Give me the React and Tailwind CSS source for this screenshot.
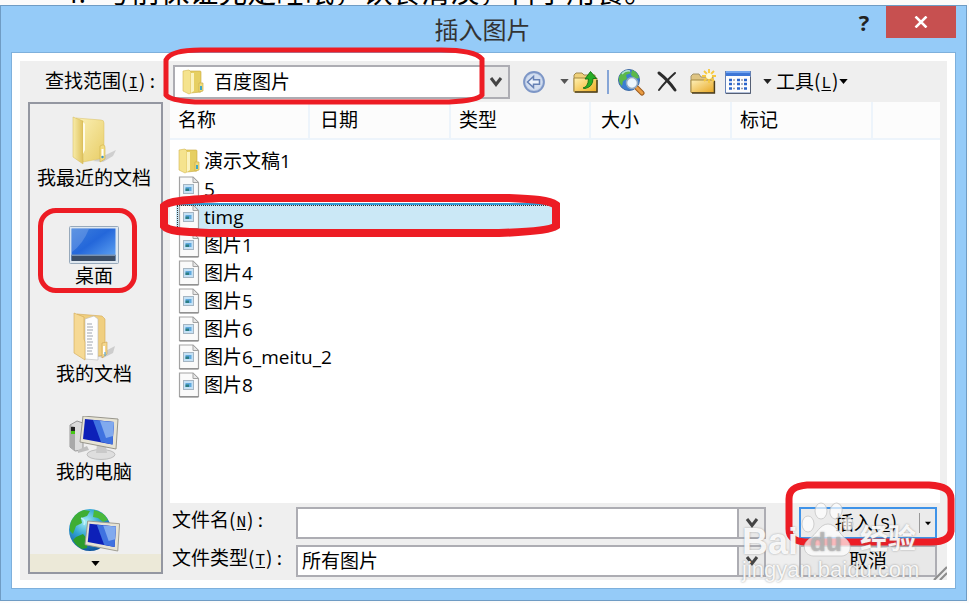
import { useState } from 'react';

const files = [
  { name: '演示文稿1', folder: true },
  { name: '5' },
  { name: 'timg' },
  { name: '图片1' },
  { name: '图片4' },
  { name: '图片5' },
  { name: '图片6' },
  { name: '图片6_meitu_2' },
  { name: '图片8' }
];

const columns = [
  { label: '名称', width: 'w-[139px] pl-2' },
  { label: '日期', width: 'w-[141px] pl-2.5' },
  { label: '类型', width: 'w-[140px] pl-2' },
  { label: '大小', width: 'w-[141px] pl-2.5' },
  { label: '标记', width: 'w-[141px] pl-2' },
  { label: '', width: '' }
];

function FolderIcon() {
  return (
    <svg width="22" height="26" viewBox="0 0 22 26" className="shrink-0">
      <path d="M7 2 L18 2 Q19 2 19 3 L19 23 L9 24 Z" fill="#e6cf62" stroke="#c9a93c" strokeWidth="0.600" />
      <path d="M1 2 L7 1 L9 3 L9 24 L7 25 L1 22 Z" fill="#f5e38e" stroke="#d3b750" strokeWidth="0.600" />
      <path d="M9 4 L12 4 L12 22 L9 24 Z" fill="#fbf3c0" />
      <path d="M17 14 L21 14 L21 22 L17 23 Z" fill="#f0dc7c" stroke="#cdb04a" strokeWidth="0.700" />
      <rect x="18" y="17" width="2" height="4" fill="#3fa7c4" />
    </svg>
  );
}

function PictureFileIcon() {
  return (
    <svg width="22" height="26" viewBox="0 0 22 26" className="shrink-0">
      <path d="M1.500 1 H15 L20.500 6.500 V24.500 H1.500 Z" fill="#fafafa" stroke="#a3a3a3" strokeWidth="1.200" />
      <path d="M1.500 25 H20.500" stroke="#858585" strokeWidth="1.200" />
      <path d="M15 1 V6.500 H20.500 Z" fill="#e6e6e6" stroke="#a3a3a3" strokeWidth="1" />
      <rect x="5.500" y="8.500" width="10" height="9" fill="#c5e1f5" stroke="#a5b5c2" strokeWidth="1" />
      <rect x="7.500" y="11" width="6" height="4" fill="#5fa9de" />
      <rect x="7.500" y="12.500" width="3.500" height="2.500" fill="#2b7d83" />
    </svg>
  );
}

function RecentIcon() {
  return (
    <svg width="46" height="50" viewBox="0 0 46 50">
      <defs>
        <linearGradient id="recentFront" x1="0" x2="1">
          <stop offset="0" stopColor="#f8ecaa" />
          <stop offset="1" stopColor="#dfc25c" />
        </linearGradient>
        <linearGradient id="recentBack" x1="0" x2="1" y2="1">
          <stop offset="0" stopColor="#fbf1b8" />
          <stop offset="1" stopColor="#e8cd66" />
        </linearGradient>
      </defs>
      <path d="M22 45 L45 34 L42 40 L32 46 Z" fill="#b9b9b9" opacity="0.600" />
      <path d="M5 2 L30 4 Q33 4 33 7 L33 42 L12 46 Z" fill="url(#recentBack)" stroke="#d9bf62" strokeWidth="0.500" />
      <path d="M2 1 L12 5 V48 L2 41 Z" fill="url(#recentFront)" stroke="#d3b654" strokeWidth="0.500" />
      <path d="M12 6 L14 8 V34 L12 38 Z" fill="#fffbe6" />
      <path d="M29 30 Q34 27 34 32 V43 L29 46 Z" fill="#f3dd80" stroke="#d1b24a" strokeWidth="0.600" />
      <path d="M31.500 33 V40" stroke="#fff" strokeWidth="2" />
      <circle cx="31.500" cy="41" r="1.200" fill="#3f94c9" />
    </svg>
  );
}

function DesktopIcon() {
  return (
    <svg width="50" height="38" viewBox="0 0 50 38">
      <defs>
        <linearGradient id="desk" x1="0" y1="0" x2="1" y2="1">
          <stop offset="0" stopColor="#3d7fdc" />
          <stop offset="0.450" stopColor="#2467da" />
          <stop offset="1" stopColor="#65a9f4" />
        </linearGradient>
      </defs>
      <rect x="0.500" y="0.500" width="49" height="37" rx="1" fill="#dfe8f0" stroke="#97a9bb" />
      <rect x="2.500" y="2.500" width="44" height="32" fill="url(#desk)" />
      <path d="M3 3 H20 Q14 18 3 26 Z" fill="#fff" opacity="0.170" />
      <rect x="2.500" y="29" width="44" height="6" fill="#3b4d65" />
      <rect x="2.500" y="28.500" width="44" height="1.500" fill="#7891b1" />
    </svg>
  );
}

function DocumentsIcon() {
  return (
    <svg width="44" height="50" viewBox="0 0 44 50">
      <path d="M24 44 L43 34 L41 41 L31 46 Z" fill="#b5b5b5" opacity="0.600" />
      <path d="M5 2 L30 4 L33 7 V43 L14 46 Z" fill="#f0cf80" stroke="#d3aa55" strokeWidth="0.600" />
      <path d="M13 7 L22 4 L26 7 V48 L13 47 Z" fill="#fdfdfd" stroke="#bbb" strokeWidth="0.600" />
      <path d="M15 12 h5 M15 15 h6 M15 18 h6 M15 21 h5 M15 24 h6 M15 27 h5 M15 30 h6 M15 33 h5 M15 36 h6 M15 39 h5 M15 42 h6" stroke="#9fa6b0" strokeWidth="1.200" />
      <path d="M2 1 L12 5 V27 L13 30 V48 L2 41 Z" fill="#f6d994" stroke="#d0a754" strokeWidth="0.600" />
      <path d="M30 31 L35 30 V42 L30 46 Z" fill="#f4d78d" stroke="#cda351" strokeWidth="0.600" />
      <path d="M32 34 V42" stroke="#fff" strokeWidth="2" />
      <path d="M33 40 V44" stroke="#58a8d8" strokeWidth="1.200" />
    </svg>
  );
}

function Monitor() {
  return (
    <g>
      <path d="M3 0 L38 3 L36 33 L0 26 Z" fill="#e6e3d4" stroke="#98968c" strokeWidth="1" />
      <path d="M5 3 L34 6 L32.500 28.500 L3 23 Z" fill="#0d20b8" />
      <path d="M13 4 L34 6 L32.500 28.500 L21 26 Z" fill="#3f72e0" />
      <path d="M20 5 L34 6 L33 20 L26 22 Z" fill="#a5c8f6" opacity="0.650" />
    </g>
  );
}

function ComputerIcon() {
  return (
    <svg width="50" height="44" viewBox="0 0 50 44">
      <path d="M1 9 L8 5 L14 7 V34 L6 35 L1 31 Z" fill="#dcdcdc" stroke="#8d8d8d" strokeWidth="0.900" />
      <path d="M1 9 L6 11 V35 L1 31 Z" fill="#a9a9a9" />
      <rect x="2" y="11" width="4" height="4" fill="#222" />
      <rect x="2" y="15" width="4" height="3" fill="#46c714" />
      <path d="M9 34 L18 30 L20 34 L9 37 Z" fill="#bfbfbf" />
      <ellipse cx="32" cy="38.500" rx="14" ry="5" fill="#dedede" stroke="#b3b3b3" strokeWidth="0.800" />
      <path d="M28 28 L37 30 L38 37 L27 37 Z" fill="#c9c9c9" />
      <g transform="translate(11 0)">
        <Monitor />
      </g>
    </svg>
  );
}

function NetworkIcon() {
  return (
    <svg width="52" height="48" viewBox="0 0 52 48">
      <defs>
        <radialGradient id="globe" cx="0.400" cy="0.300" r="0.750">
          <stop offset="0" stopColor="#a4eef5" />
          <stop offset="0.450" stopColor="#32a4d4" />
          <stop offset="1" stopColor="#0d4e97" />
        </radialGradient>
      </defs>
      <circle cx="22" cy="22" r="21" fill="url(#globe)" />
      <path d="M2 17 Q5 5 16 2 L22 3 L19 8 L13 10 L14 15 L8 18 L5 26 L2 23 Z" fill="#3fae34" />
      <path d="M26 2 Q36 4 40 12 L35 14 L30 10 L25 9 Z" fill="#4ab93c" />
      <path d="M8 29 L15 26 L20 32 L19 40 L14 41 Q7 37 5 32 Z" fill="#2c9c2b" />
      <path d="M13 10 Q18 12 16 17" fill="none" stroke="#d8fbff" strokeWidth="1.500" opacity="0.700" />
      <g transform="translate(17 13) scale(0.910)">
        <Monitor />
      </g>
    </svg>
  );
}

const places = [
  { label: '我最近的文档', icon: RecentIcon },
  { label: '桌面', icon: DesktopIcon, marked: true },
  { label: '我的文档', icon: DocumentsIcon },
  { label: '我的电脑', icon: ComputerIcon }
];

function BackIcon() {
  return (
    <svg width="24" height="24" viewBox="0 0 24 24">
      <circle cx="12" cy="12" r="10" fill="#bccbe5" stroke="#7d96c6" strokeWidth="1.800" />
      <circle cx="12" cy="12" r="8.200" fill="#d3def0" />
      <path d="M5.500 12 L11.500 6.500 V9.800 H17.500 V14.200 H11.500 V17.500 Z" fill="#eef4fc" stroke="#6681b5" strokeWidth="1.500" />
    </svg>
  );
}

function UpFolderIcon() {
  return (
    <svg width="26" height="24" viewBox="0 0 26 24">
      <defs>
        <linearGradient id="upFolder" x1="0" y1="0" x2="1" y2="1">
          <stop offset="0" stopColor="#fff1b0" />
          <stop offset="1" stopColor="#eeac1c" />
        </linearGradient>
      </defs>
      <path d="M1 21 V5 L3 3 H9 L11 5 H22 V21 Z" fill="#efd07a" stroke="#a08a50" strokeWidth="1" />
      <path d="M1 8 H24 V22 H1 Z" fill="url(#upFolder)" stroke="#a58a42" strokeWidth="1" />
      <path d="M2 22 H24 V10" fill="none" stroke="#4f411f" strokeWidth="1.500" />
      <path d="M10 18 Q15 17 15.500 9 H12 L17.500 1.500 L23.500 8.500 H20 Q20 17 12 18.500 Z" fill="#27ad25" stroke="#117014" strokeWidth="0.900" />
    </svg>
  );
}

function SearchWebIcon() {
  return (
    <svg width="28" height="28" viewBox="0 0 28 28">
      <circle cx="12" cy="12" r="10.500" fill="#3b7fd2" stroke="#426da5" strokeWidth="1" />
      <path d="M2 9 Q5 2 12 2 L14 5 L9 7 L10 11 L6 13 L5 18 Q1 14 2 9 Z" fill="#5bb84a" />
      <path d="M15 2 Q21 4 22 10 L18 11 L14 7 Z" fill="#5bb84a" />
      <path d="M5 6 Q8 2 13 3" stroke="#c4eafa" strokeWidth="1.500" fill="none" opacity="0.800" />
      <path d="M20 20 L25 25" stroke="#9b5a1d" strokeWidth="5" strokeLinecap="round" />
      <path d="M20 20 L25 25" stroke="#e99c43" strokeWidth="3" strokeLinecap="round" />
      <circle cx="15" cy="15" r="5.500" fill="#edf6fd" stroke="#90a9c4" strokeWidth="1.500" />
    </svg>
  );
}

function DeleteIcon() {
  return (
    <svg width="24" height="24" viewBox="0 0 24 24">
      <path d="M4 3 Q13 10 20 20" fill="none" stroke="#2c2c2c" strokeWidth="3" strokeLinecap="round" />
      <path d="M20 3 Q10 12 4 20" fill="none" stroke="#2c2c2c" strokeWidth="2" strokeLinecap="round" />
    </svg>
  );
}

function NewFolderIcon() {
  return (
    <svg width="28" height="26" viewBox="0 0 28 26">
      <defs>
        <linearGradient id="newFolder" x1="0" y1="0" x2="1" y2="1">
          <stop offset="0" stopColor="#fdf0b9" />
          <stop offset="1" stopColor="#e8a722" />
        </linearGradient>
      </defs>
      <path d="M2 23 V7 L4 5 H10 L12 8 H24 V23 Z" fill="#dfc583" stroke="#a3946b" strokeWidth="1" />
      <path d="M2 11 H25 V23.500 H2 Z" fill="url(#newFolder)" stroke="#a58a42" strokeWidth="1" />
      <path d="M3 24 H25.500 V12" fill="none" stroke="#4b3d1c" strokeWidth="1.300" />
      <path d="M20 0 V14 M13 7 H27 M15 2 L25 12 M25 2 L15 12" stroke="#f6c83f" strokeWidth="1.800" />
      <circle cx="20" cy="7" r="3" fill="#fffbd8" />
    </svg>
  );
}

function ViewsIcon() {
  return (
    <svg width="26" height="24" viewBox="0 0 26 24">
      <rect x="0.500" y="1.500" width="25" height="21.500" fill="#fdfdfd" stroke="#6581b4" />
      <rect x="1" y="1" width="24" height="5" fill="#3d76d6" />
      <rect x="1" y="1" width="24" height="2" fill="#74a5ee" />
      <path d="M4 10 h3 M12 10 h3 M19 10 h3 M4 14 h3 M12 14 h3 M19 14 h3 M4 18.500 h3 M12 18.500 h3 M19 18.500 h3" stroke="#2b65cb" strokeWidth="2.500" />
      <path d="M8 10 h2 M16 10 h2 M8 14 h2 M16 14 h2 M8 18.500 h2 M16 18.500 h2" stroke="#9a9fa9" strokeWidth="1.500" />
      <path d="M1 23.500 H25.500 V7" stroke="#555f74" strokeWidth="1" fill="none" />
    </svg>
  );
}

function Caret({ className }) {
  return (
    <svg width="9" height="5" viewBox="0 0 10 6" className={className} fill="currentColor">
      <path d="M0 0 H10 L5 6 Z" />
    </svg>
  );
}

function DropArrow() {
  return (
    <span className="pointer-events-none flex w-[27px] shrink-0 items-center justify-center border-l-2 border-[#adadb3] bg-[#e9e9e9]">
      <svg width="14" height="12" viewBox="0 0 14 12">
        <path d="M2 2 L7 8.500 L12 2" fill="none" stroke="#444" strokeWidth="3" />
      </svg>
    </span>
  );
}

// Accelerator letter in brackets, e.g. (N)
function Hotkey({ letter, colon }) {
  return (
    <span className="font-['Noto_Sans_CJK_SC',sans-serif]">
      (<u className="px-px font-['Liberation_Mono',monospace] text-base leading-6 underline-offset-2">{letter}</u>){colon && ' :'}
    </span>
  );
}

function Watermark() {
  return (
    <div className="pointer-events-none absolute right-[46px] bottom-[18px] z-20 w-[178px] font-['Liberation_Sans','Noto_Sans_CJK_SC',sans-serif] text-white/90">
      <svg width="56" height="58" viewBox="0 0 56 58" className="absolute -top-1 left-[58px]">
        <g fill="#fff" fillOpacity="0.700" stroke="#bdbdbd" strokeOpacity="0.700" strokeWidth="1">
          <ellipse cx="8" cy="24" rx="6" ry="8" />
          <ellipse cx="21" cy="11" rx="6" ry="8" />
          <ellipse cx="36" cy="11" rx="6" ry="8" transform="rotate(12 36 11)" />
          <ellipse cx="48" cy="24" rx="5" ry="7" />
          <path d="M28 24 C20 24 17 34 9 39 C1 45 4 55 13 56 H42 C51 55 53 45 46 39 C39 34 36 24 28 24 Z" />
        </g>
      </svg>
      <div className="flex h-[54px] items-end text-4xl leading-8 font-bold [text-shadow:0_0_2px_rgb(120_120_120/0.7)]">
        <span>Bai</span>
        <span className="relative ml-3 text-[26px] leading-8 text-[#b9b9b9]/80">du</span>
        <span className="mr-1 ml-auto text-[28px] leading-9">经验</span>
      </div>
      <div className="text-[22px] leading-6 [text-shadow:0_0_2px_rgb(120_120_120/0.8)]">jingyan.baidu.com</div>
    </div>
  );
}

export default function App() {
  const [selected, setSelected] = useState('timg');
  const [fileName, setFileName] = useState('');

  return (
    <div className="flex h-screen min-h-[600px] flex-col bg-[#fbfbfb] pr-[2px] pb-[2px] font-['Open_Sans','Noto_Sans_CJK_SC',sans-serif] text-[19px] leading-6 text-black">
      <div className="flex h-[5px] shrink-0 items-end overflow-hidden pl-[62px]">
        <p className="flex h-[29px] gap-4 text-[29px] leading-8 whitespace-nowrap">
          <span>4.</span>
          <span>考前保证充足睡眠，饮食清淡，科学用餐。</span>
        </p>
      </div>

      <div role="dialog" aria-labelledby="dialog-title" className="relative flex min-h-0 flex-1 flex-col border border-[#6f9cc4] bg-[#95cbf8] px-[10px] pb-[11px]">
        <header className="flex h-[46px] shrink-0 items-start">
          <h1 id="dialog-title" className="flex-1 pt-2 pl-28 text-center text-2xl leading-8 text-[#333]">插入图片</h1>
          <div className="flex">
            <button type="button" aria-label="帮助" className="h-8 w-[44px] font-['Open_Sans',sans-serif] text-[22px] leading-8 font-bold text-[#222]">?</button>
            <button type="button" aria-label="关闭" className="flex h-8 w-[70px] items-center justify-center bg-[#c75050]">
              <svg width="14" height="12" viewBox="0 0 14 12">
                <path d="M1.500 0.500 L12.500 11.500 M12.500 0.500 L1.500 11.500" stroke="#fff" strokeWidth="2.500" />
              </svg>
            </button>
          </div>
        </header>

        <div className="flex min-h-0 flex-1 border border-[#7eb0dc] bg-white p-2">
          <div className="flex min-w-0 flex-1 flex-col bg-[#efefef] pr-[7px] pl-2">
            <div className="flex h-[41px] shrink-0 items-center">
              <label htmlFor="look-in" className="w-[145px] pl-[17px] whitespace-nowrap">
                查找范围<Hotkey letter="I" colon />
              </label>
              <div className="relative flex h-[34px] w-[337px] border-2 border-[#adadb3] bg-white">
                <span className="flex items-center pl-[7px]"><FolderIcon /></span>
                <select id="look-in" className="min-w-0 flex-1 appearance-none bg-transparent pl-2.5 outline-none">
                  <option>百度图片</option>
                </select>
                <DropArrow />
                <svg width="326" height="60" viewBox="0 0 326 60" className="pointer-events-none absolute -top-[22px] -left-[14px] z-10">
                  <path d="M40 5 H280 C300 5 316 8 321 14 V50 C318 54 308 56 288 57 H34 C18 56 8 54 5 50 V15 C8 8 22 5 40 5 Z" fill="none" stroke="#ed1c24" strokeWidth="5" />
                </svg>
              </div>
              <div className="flex items-center">
                <button type="button" aria-label="后退" className="ml-3"><BackIcon /></button>
                <Caret className="ml-3.5 text-[#555]" />
                <button type="button" aria-label="向上一级" className="ml-1"><UpFolderIcon /></button>
                <span className="ml-2 h-6 w-0.5 bg-[#86a5d6]" />
                <button type="button" aria-label="搜索 Web" className="ml-2"><SearchWebIcon /></button>
                <button type="button" aria-label="删除" className="ml-2.5"><DeleteIcon /></button>
                <button type="button" aria-label="新建文件夹" className="ml-2.5"><NewFolderIcon /></button>
                <button type="button" aria-label="视图" className="ml-2"><ViewsIcon /></button>
                <Caret className="ml-3 text-[#222]" />
                <button type="button" className="ml-1 flex items-center whitespace-nowrap">
                  工具<Hotkey letter="L" />
                  <Caret />
                </button>
              </div>
            </div>

            <div className="flex min-h-0 flex-1 gap-[7px]">
              <nav aria-label="位置" className="mb-1.5 flex w-[135px] shrink-0 flex-col border-2 border-[#9497a1]">
                <ul className="min-h-0 flex-1 overflow-hidden">
                  {places.map(({ label, icon: Icon, marked }) => (
                    <li key={label} className="relative h-[98px] pt-3.5">
                      <button type="button" className="flex w-full flex-col items-center pr-[3px] whitespace-nowrap">
                        <span className="flex h-12 items-end">
                          <Icon />
                        </span>
                        <span>{label}</span>
                      </button>
                      {marked && (
                        <span className="pointer-events-none absolute top-1.5 left-2 h-[85px] w-[99px] rounded-[18px] border-[5px] border-[#ed1c24]" />
                      )}
                    </li>
                  ))}
                  <li className="h-[58px] pt-3">
                    <button type="button" aria-label="网上邻居" className="flex w-full justify-center pr-[3px]">
                      <NetworkIcon />
                    </button>
                  </li>
                </ul>
                <button type="button" aria-label="向下滚动" className="flex h-[18px] shrink-0 items-center justify-center bg-[#ece9d8]">
                  <Caret />
                </button>
              </nav>

              <div className="flex min-w-0 flex-1 flex-col">
                <div className="min-h-0 flex-1 bg-white">
                  <table className="w-full table-fixed border-collapse text-left">
                    <thead>
                      <tr className="h-[37px] border-b-2 border-[#edf4fb] bg-[#fcfcfc]">
                        {columns.map(({ label, width }) => (
                          <th key={label} className={`border-r-2 border-[#edf4fb] font-normal last:border-r-0 ${width}`}>
                            {label}
                          </th>
                        ))}
                      </tr>
                    </thead>
                    <tbody>
                      <tr className="h-2"><td colSpan={6} /></tr>
                      {files.map(({ name, folder }) => (
                        <tr key={name}>
                          <td colSpan={6} className="p-0 pl-1.5">
                            <div
                              onClick={() => setSelected(name)}
                              className={`relative flex h-7 w-[380px] items-center gap-1 pl-0.5 ${selected === name ? 'bg-[#cbe8f6]' : ''}`}
                            >
                              {folder ? <FolderIcon /> : <PictureFileIcon />}
                              <span>{name}</span>
                              {selected === name && (
                                <svg width="404" height="46" viewBox="0 0 404 46" className="pointer-events-none absolute -top-[11px] -left-[17px] z-10">
                                  <path d="M17 12 H396" stroke="#2f9bd6" strokeWidth="2" />
                                  <path d="M18 13.500 H396 M18.500 14 V38" stroke="#333" strokeWidth="1" strokeDasharray="1 1" fill="none" />
                                  <path d="M60 6 H350 C375 7 390 8 397 13 V34 C392 38 370 40 340 41 H50 C22 40 9 39 5 34 V14 C9 9 25 8 60 6 Z" fill="none" stroke="#ed1c24" strokeWidth="8" />
                                </svg>
                              )}
                            </div>
                          </td>
                        </tr>
                      ))}
                    </tbody>
                  </table>
                </div>

                <div className="flex shrink-0 pt-1 pr-[3px] pb-[3px]">
                  <div className="flex min-w-0 flex-1 flex-col gap-1.5">
                    <div className="flex">
                      <label htmlFor="file-name" className="w-[126px] shrink-0 pl-0.5 whitespace-nowrap">
                        文件名<Hotkey letter="N" colon />
                      </label>
                      <div className="flex h-8 min-w-0 flex-1 border-2 border-[#adadb3] bg-white">
                        <input
                          id="file-name"
                          value={fileName}
                          onChange={(e) => setFileName(e.target.value)}
                          className="min-w-0 flex-1 px-1 outline-none"
                        />
                        <DropArrow />
                      </div>
                    </div>
                    <div className="flex">
                      <label htmlFor="file-type" className="w-[126px] shrink-0 pl-0.5 whitespace-nowrap">
                        文件类型<Hotkey letter="T" colon />
                      </label>
                      <div className="flex h-8 min-w-0 flex-1 border-2 border-[#adadb3] bg-white">
                        <select id="file-type" className="min-w-0 flex-1 appearance-none bg-transparent pl-1 outline-none">
                          <option>所有图片</option>
                        </select>
                        <DropArrow />
                      </div>
                    </div>
                  </div>

                  <div className="ml-[33px] flex w-[138px] shrink-0 flex-col gap-1.5">
                    <div className="relative flex h-8 border-2 border-[#3f93e8] bg-[#ebebeb]">
                      <button type="button" className="flex flex-1 items-center justify-center pl-3 whitespace-nowrap">
                        插入<Hotkey letter="S" />
                      </button>
                      <button type="button" aria-label="插入选项" className="my-1 flex w-4 items-center justify-center border-l border-[#999]">
                        <Caret className="w-1.5" />
                      </button>
                      <svg width="174" height="68" viewBox="0 0 174 68" className="pointer-events-none absolute -top-[30px] -left-[18px] z-10">
                        <path d="M24 6 H146 C162 7 168 11 168 20 V52 C167 60 160 63 148 63 H22 C10 62 6 58 6 50 V20 C6 11 12 7 24 6 Z" fill="none" stroke="#ed1c24" strokeWidth="7" />
                      </svg>
                    </div>
                    <button type="button" className="h-8 border-2 border-[#adadb3] bg-[#e8e8e8] leading-7">取消</button>
                  </div>
                </div>
              </div>
            </div>
          </div>
        </div>

        <svg width="14" height="14" viewBox="0 0 14 14" className="absolute right-[19px] bottom-5">
          <path d="M1 14 L14 1 M7 14 L14 7" stroke="#8d8d8d" strokeWidth="2.200" />
        </svg>
        <Watermark />
      </div>
    </div>
  );
}
